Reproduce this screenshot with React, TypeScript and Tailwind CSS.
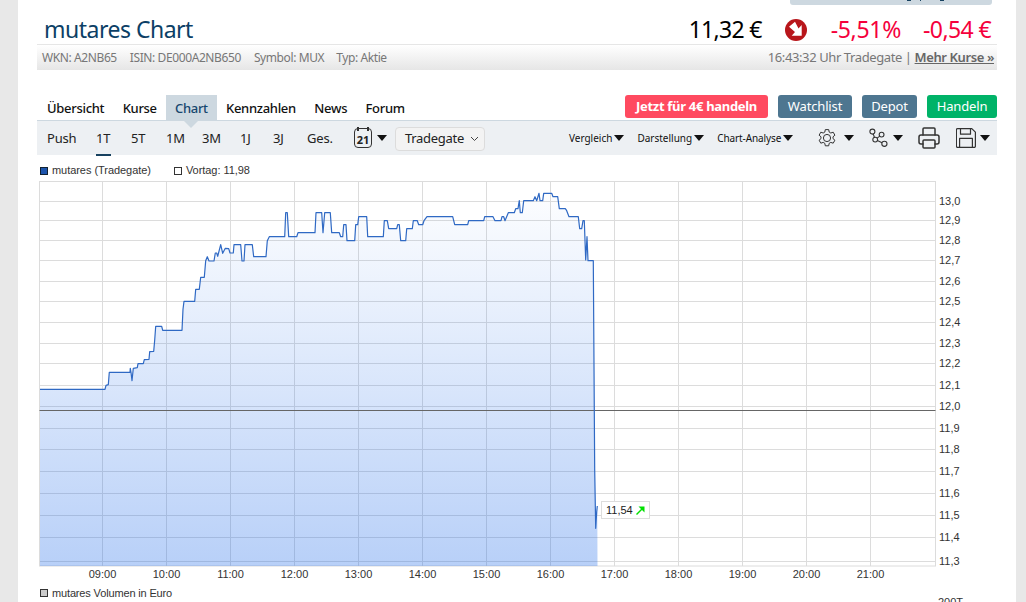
import React from "react";
import { Printer } from "lucide-react";

const xLines = [102.5, 166.5, 230.5, 294.5, 358.5, 422.5, 486.5, 550.5, 614.5, 678.5, 742.5, 806.5, 870.5];
const xLabels = ["09:00", "10:00", "11:00", "12:00", "13:00", "14:00", "15:00", "16:00", "17:00", "18:00", "19:00", "20:00", "21:00"];

const yTicks: [string, number][] = [
  ["13,0", 201], ["12,9", 220], ["12,8", 240], ["12,7", 260], ["12,6", 281], ["12,5", 301],
  ["12,4", 322], ["12,3", 343], ["12,2", 363], ["12,1", 385], ["12,0", 406], ["11,9", 428],
  ["11,8", 449], ["11,7", 471], ["11,6", 493], ["11,5", 515], ["11,4", 537], ["11,3", 561],
];

// traced from the reference, page coordinates
const linePoints = [
  [40, 389.3], [105, 389.3], [106, 385.3], [108.3, 384.7], [109.3, 372.3], [130, 372.3], [130.3, 368.3], [131, 372.3],
  [132, 380.7], [133.3, 368.3], [137.3, 367.7], [138, 363.7], [143.3, 363.7], [144.3, 359.7], [149, 359.3], [149.7, 351.7],
  [153.7, 351.3], [154.7, 340], [155.7, 326.3], [161.7, 326.3], [162.7, 330.3], [182, 330.3], [183, 309.3], [184, 301.3],
  [194.7, 301.3], [195.7, 289.3], [199.3, 289.3], [200.7, 277.3], [204.3, 277.3], [205.7, 260.7], [207.3, 256.7], [209, 261],
  [214, 261], [215.3, 253], [216.7, 253], [217.7, 256.3], [220.7, 244.7], [222.7, 253.3], [225.3, 248.3], [228.7, 248.7],
  [230, 253], [233.3, 253], [234, 244.7], [240.7, 244.7], [242, 261], [244, 261], [245, 244.7], [252.3, 244.7], [253.7, 256.7],
  [266, 256.7], [267.3, 240.7], [269.3, 236.7], [284.7, 236.7], [285.7, 212.7], [287.3, 212.7], [288.7, 236.7], [296.7, 236.7],
  [298, 232.7], [315, 232.7], [316, 212.7], [321.7, 212.7], [323, 232.7], [324.7, 212.7], [330.3, 212.7],
  [331.7, 232.7], [339.3, 232.7], [340.7, 236.7], [342.7, 236.7], [343.7, 224.7], [346, 224.7], [347, 240.7], [354.7, 240.7],
  [355.7, 224.7], [357.7, 224.7], [358.7, 216.7], [366.7, 216.7], [367.7, 236.7], [383.3, 236.7], [384.3, 220.7], [387.3, 220.7],
  [388.7, 228.7], [396.7, 228.7], [397.7, 224.7], [399.3, 224.7], [400.7, 240.7], [405.7, 240.7], [406.7, 228.7], [412.3, 228.7],
  [413.3, 220.7], [417.3, 220.7], [418.7, 224.7], [422.7, 224.7], [424, 220.7], [427, 216.7], [452.7, 216.7], [454.7, 224.7],
  [467.7, 224.7], [468.7, 220.7], [483.7, 220.7], [484.7, 216.7], [493, 216.7], [495, 220.7], [501, 220.7], [502, 216.7],
  [503.7, 216.7], [505, 220.7], [508.3, 212.7], [514.3, 212.7], [515.7, 208.7], [518, 208.7], [519.3, 200.7], [520.3, 212.7],
  [522.3, 212.7], [523.7, 200.7], [533.3, 200.7], [535, 196.7], [536.7, 200.7], [539, 193.3], [540, 200.7], [542.7, 200.7],
  [543.7, 193.3], [551.7, 193.3], [553, 196.7], [557.7, 196.7], [559.3, 208.7], [565.3, 208.7], [566.7, 210.7], [569, 216.7],
  [578.3, 216.7], [579.7, 228.7], [581.7, 228.7], [583, 220.7], [584.3, 220.7], [585.7, 260], [587, 236.7], [588, 260.7],
  [593.3, 260.7], [594.7, 470], [595.7, 528.3], [596.7, 511.7], [597.3, 506],
];
const linePath = linePoints.map(p => p.join(",")).join(" ");
const fillPath = `40,566 ${linePath} 597.5,566`;

function Caret(props: { className?: string }) {
  return (
    <svg width="10" height="6" viewBox="0 0 10 6" className={props.className}>
      <path d="M0 0h10L5 6z" fill="#111" />
    </svg>
  );
}

function CalendarIcon() {
  return (
    <div className="relative w-[18px] h-[20px] rounded-[4px] border-[1.5px] border-[#333] flex items-center justify-center">
      <div className="absolute -top-[2.5px] left-[2px] right-[2px] flex justify-between">
        <span className="w-[2px] h-[4px] bg-[#333]" />
        <span className="w-[2px] h-[4px] bg-[#333]" />
      </div>
      <span className="text-[11px] font-bold leading-none mt-[3px] text-[#222]">21</span>
    </div>
  );
}

function GearIcon() {
  return (
    <svg width="20" height="20" viewBox="0 0 20 20" fill="none" stroke="#333" strokeWidth="1" strokeLinejoin="round">
      <path d="M8.3 1h3.4l.5 2.5 1.6.9 2.4-.8 1.7 3-1.9 1.6v1.8l1.9 1.6-1.7 3-2.4-.8-1.6.9-.5 2.5H8.3l-.5-2.5-1.6-.9-2.4.8-1.7-3 1.9-1.6V8.2L2.1 6.6l1.7-3 2.4.8 1.6-.9z" transform="translate(0 .6)" />
      <circle cx="10" cy="10" r="3.6" />
    </svg>
  );
}

function NodesIcon() {
  return (
    <svg width="19" height="20" viewBox="0 0 19 20" fill="none" stroke="#333" strokeWidth="1.1">
      <circle cx="3.4" cy="3.6" r="2.5" />
      <circle cx="12.6" cy="6.6" r="2.4" />
      <circle cx="6.2" cy="11.6" r="2.4" />
      <circle cx="15.4" cy="15.8" r="2.6" />
      <path d="M4.2 5.9 5.4 9.3M10.8 8.1 8.1 10.1M8.4 12.6l4.6 2.1" />
    </svg>
  );
}

function SaveIcon() {
  return (
    <svg width="20" height="20" viewBox="0 0 20 20" fill="none" stroke="#333" strokeWidth="1.2" strokeLinejoin="round">
      <path d="M1.6.6h14.2l3.6 3.6v14a1.2 1.2 0 0 1-1.2 1.2H1.6a1.2 1.2 0 0 1-1.2-1.2V1.8A1.2 1.2 0 0 1 1.6.6z" />
      <path d="M4.5.6v5.6h10V.6M3.6 19.4v-9h12.8v9" />
    </svg>
  );
}

function Header() {
  return (
    <>
      <div className="flex justify-end h-[5px]">
        <div className="relative w-[202px] h-[5px] mr-[5px] bg-[#cdd8e0] rounded-b-[3px]">
          <span className="absolute left-[117px] top-0 w-[4px] h-[1px] bg-[#17415f]" />
          <span className="absolute left-[130px] top-0 w-[1px] h-[1px] bg-[#17415f]" />
          <span className="absolute left-[150px] top-0 w-[4px] h-[1px] bg-[#17415f]" />
        </div>
      </div>
      <div className="flex items-center h-[39px] pt-[10px] pl-[7px] pr-[6px]">
        <h1 className="text-[23px] tracking-[-0.5px] leading-none text-[#0c3f66]">mutares Chart</h1>
        <div className="ml-auto flex items-center text-[23px] leading-none">
          <span className="text-black tracking-[-0.7px]">11,32 €</span>
          <svg width="22" height="22" viewBox="0 0 22 22" className="ml-[23px]">
            <circle cx="11" cy="11" r="11" fill="#b8161b" />
            <path d="M16.7 6V16.7H6.7L10 13 4 7.7 10 2.7 13.5 9.5z" fill="#fff" />
          </svg>
          <span className="text-[#f5003c] tracking-[-0.3px] ml-[24px]">-5,51%</span>
          <span className="text-[#f5003c] tracking-[-0.6px] ml-[22px]">-0,54 €</span>
        </div>
      </div>
      <div className="flex items-center h-[26px] pl-[5px] pr-[3px] border-t border-[#e6e6e6] bg-gradient-to-b from-white to-[#e6e6e6] text-[12px] tracking-[-0.4px] text-[#777] whitespace-nowrap">
        <span>WKN: A2NB65</span>
        <span className="ml-[13px]">ISIN: DE000A2NB650</span>
        <span className="ml-[13px]">Symbol: MUX</span>
        <span className="ml-[12px]">Typ: Aktie</span>
        <span className="ml-auto text-[13px]">
          16:43:32 Uhr Tradegate | <a className="font-semibold underline text-[#666]">Mehr Kurse »</a>
        </span>
      </div>
    </>
  );
}

function Tabs() {
  const tabs = ["Übersicht", "Kurse", "Chart", "Kennzahlen", "News", "Forum"];
  return (
    <div className="flex items-stretch h-[26px] mt-[25px] border-b border-[#cdd8e0]">
      <div className="flex items-stretch h-[25px] text-[13px] tracking-[-0.3px] font-medium text-[#111] pl-[0.8px]">
        {tabs.map(t => (
          <div
            key={t}
            className={t === "Chart"
              ? "flex items-center pt-[3px] px-[9px] bg-[#cdd8e0] text-[#16466e]"
              : "flex items-center pt-[3px] px-[9.2px]"}
          >
            {t}
          </div>
        ))}
      </div>
      <div className="ml-auto flex items-start gap-[10px] text-[13px] tracking-[-0.15px] text-white">
        <button className="w-[143px] h-[23px] pt-[1px] rounded-[3px] bg-[#ff4a60] font-bold tracking-[-0.3px]">Jetzt für 4€ handeln</button>
        <button className="w-[74px] h-[23px] pt-[1px] rounded-[3px] bg-[#4e7690]">Watchlist</button>
        <button className="w-[55px] h-[23px] pt-[1px] rounded-[3px] bg-[#4e7690]">Depot</button>
        <button className="w-[70px] h-[23px] pt-[1px] rounded-[3px] bg-[#00b368]">Handeln</button>
      </div>
    </div>
  );
}

function Toolbar() {
  const ranges = [
    { label: "Push", w: "w-[49px]" },
    { label: "1T", w: "w-[35px]", active: true },
    { label: "5T", w: "w-[35px]" },
    { label: "1M", w: "w-[36px]" },
    { label: "3M", w: "w-[38px]" },
    { label: "1J", w: "w-[33px]" },
    { label: "3J", w: "w-[34px]" },
    { label: "Ges.", w: "w-[47px]" },
  ];
  return (
    <div className="relative flex items-center h-[34px] bg-[#edf0f3] text-[#222] whitespace-nowrap">
      <div className="absolute left-[147px] top-0 w-0 h-0 border-x-[7px] border-x-transparent border-t-[7px] border-t-[#cdd8e0]" />
      <div className="flex h-full items-center text-[13px] tracking-[-0.2px] pl-[10px] pt-[1px]">
        {ranges.map(r => (
          <div key={r.label} className={`${r.w} relative`}>
            <span>{r.label}</span>
            {r.active && <span className="absolute left-0 -bottom-[8px] w-[15px] h-[2px] bg-[#17415f]" />}
          </div>
        ))}
      </div>
      <CalendarIcon />
      <Caret className="ml-[5px]" />
      <div className="flex items-center justify-between w-[90px] h-[24px] mt-[2px] ml-[8px] pl-[9px] pr-[5px] rounded-[4px] border border-[#dcdcdc] bg-[#f3f3f3] text-[13px] tracking-[-0.3px]">
        Tradegate
        <svg width="9" height="6" viewBox="0 0 9 6" fill="none" stroke="#444" strokeWidth="1"><path d="M1 1l3.5 3.5L8 1" /></svg>
      </div>
      <div className="flex items-center text-[10px] text-[#111] ml-[84px]">
        Vergleich<Caret className="ml-[2px]" />
      </div>
      <div className="flex items-center text-[10px] text-[#111] ml-[13px]">
        Darstellung<Caret className="ml-[2px]" />
      </div>
      <div className="flex items-center text-[10px] tracking-[-0.1px] text-[#111] ml-[13px]">
        Chart-Analyse<Caret className="ml-[2px]" />
      </div>
      <div className="ml-auto flex items-center pr-[7px]">
        <GearIcon />
        <Caret className="ml-[7px]" />
        <div className="ml-[15px]"><NodesIcon /></div>
        <Caret className="ml-[5px]" />
        <Printer size={24} strokeWidth={1.5} className="ml-[14px] text-[#333]" />
        <div className="ml-[15px]"><SaveIcon /></div>
        <Caret className="ml-[4px]" />
      </div>
    </div>
  );
}

function Legend() {
  return (
    <div className="flex items-center h-[15px] mt-[8px] pl-[3px] font-['Liberation_Sans',sans-serif] text-[11px] tracking-[-0.05px] text-[#333]">
      <span className="w-[8px] h-[8px] bg-[#1c54ac] border border-[#123]" />
      <span className="ml-[4px]">mutares (Tradegate)</span>
      <span className="w-[8px] h-[8px] ml-[23px] bg-white border border-[#333]" />
      <span className="ml-[4px]">Vortag: 11,98</span>
    </div>
  );
}

function PriceChart() {
  return (
    <div className="relative">
      <svg width="960" height="408" viewBox="37 178 960 408" className="block font-['Liberation_Sans',sans-serif]">
        <defs>
          <linearGradient id="area" x1="0" y1="0" x2="0" y2="1">
            <stop offset="0" stopColor="rgb(18,98,232)" stopOpacity="0.01" />
            <stop offset="1" stopColor="rgb(18,98,232)" stopOpacity="0.3" />
          </linearGradient>
        </defs>
        <g stroke="#dcdcdc" strokeWidth="1" fill="none">
          <rect x="39.5" y="181.5" width="896" height="384.5" />
          {xLines.map(x => <line key={x} x1={x} y1="181.5" x2={x} y2="566" />)}
          {yTicks.map(([label, y]) => <line key={label} x1="39.5" y1={y + 0.5} x2="935.5" y2={y + 0.5} />)}
        </g>
        <polygon points={fillPath} fill="url(#area)" />
        <line x1="39.5" y1="410.5" x2="935.5" y2="410.5" stroke="#666" strokeWidth="1" />
        <polyline points={linePath} fill="none" stroke="#2f69c4" strokeWidth="1.2" strokeLinejoin="round" />
        <g fontSize="11" fill="#333">
          {yTicks.map(([label, y]) => <text key={label} x="939" y={y + 4}>{label}</text>)}
          {xLabels.map((label, i) => <text key={label} x={xLines[i]} y="578" textAnchor="middle">{label}</text>)}
        </g>
      </svg>
      <div className="absolute left-[564px] top-[323px] flex items-center h-[18px] w-[49px] pl-[4px] bg-white border border-[#ddd] font-['Liberation_Sans',sans-serif] text-[11px] text-[#222]">
        11,54
        <svg width="9" height="9" viewBox="0 0 9 9" className="ml-[3px]">
          <path d="M.5 8.5 6 3" stroke="#00e000" strokeWidth="1.4" />
          <path d="M2.5.5H8.5V6.5z" fill="#00e000" />
        </svg>
      </div>
    </div>
  );
}

function VolumeChart() {
  return (
    <>
      <div className="flex items-center h-[14px] pl-[3px] font-['Liberation_Sans',sans-serif] text-[11px] tracking-[-0.15px] text-[#333]">
        <span className="w-[8px] h-[8px] bg-[#ccc] border border-[#333]" />
        <span className="ml-[4px]">mutares Volumen in Euro</span>
      </div>
      <div className="flex justify-end pr-[34px] -mt-[3px] font-['Liberation_Sans',sans-serif] text-[11px] leading-none text-[#333]">200T</div>
    </>
  );
}

export default function App() {
  return (
    <div className="w-[1026px] h-[602px] overflow-hidden bg-[#e8e8e8] font-['Noto_Sans',sans-serif]">
      <div className="w-[998px] h-full ml-[18px] px-[19px] bg-white">
        <Header />
        <Tabs />
        <Toolbar />
        <Legend />
        <PriceChart />
        <VolumeChart />
      </div>
    </div>
  );
}
